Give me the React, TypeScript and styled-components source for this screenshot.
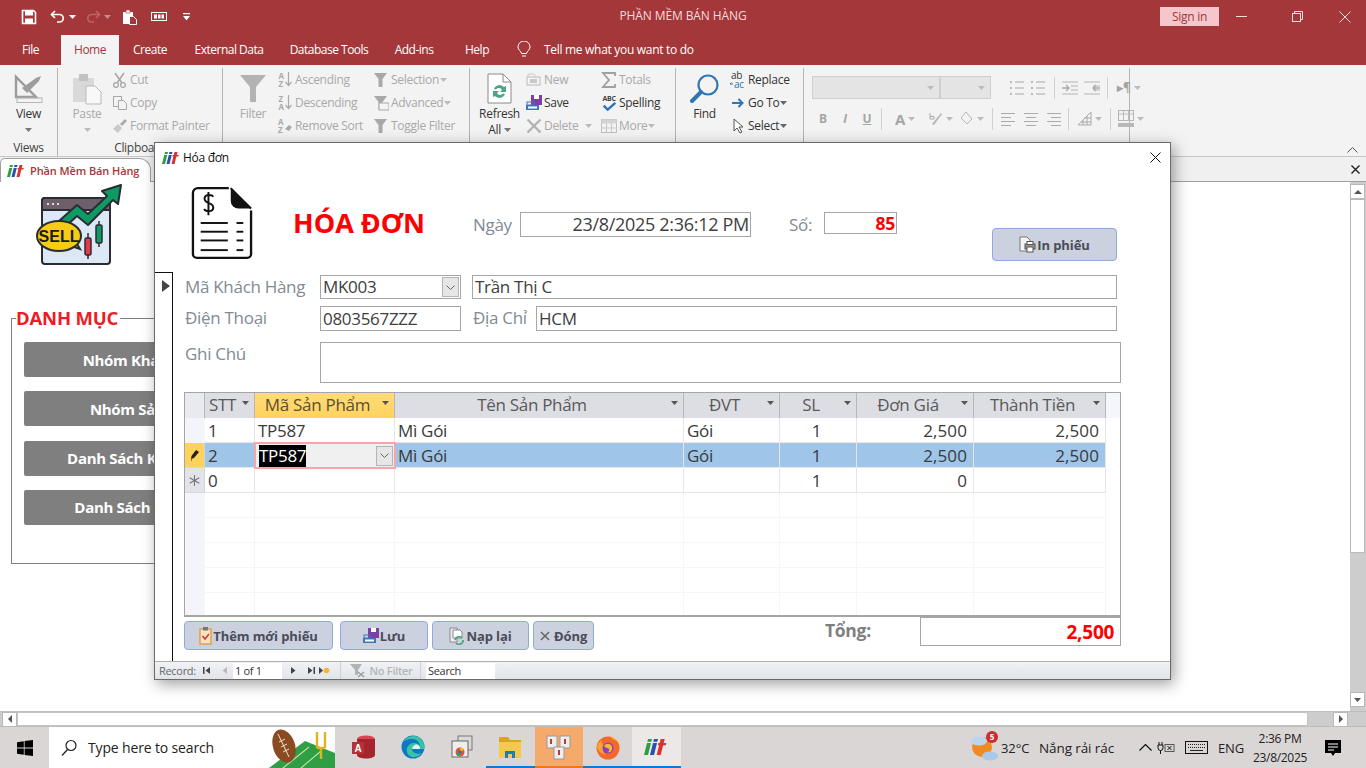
import React from "react";
import styled, { createGlobalStyle } from "styled-components";

const GlobalStyle = createGlobalStyle`
  html, body {
    margin: 0;
    padding: 0;
    width: 1366px;
    height: 768px;
    overflow: hidden;
    background: white;
    font-family: "Open Sans", "Noto Sans", sans-serif;
    letter-spacing: -0.3px;
  }
  * { box-sizing: border-box; }
`;

const OFF = "#a9a9a9";
const GRID_COLS = "20px 50px 140px 289px 96px 77px 117px 132px";

/* ---------- drawings ---------- */

const Ico = ({ s = 16, w, children }: { s?: number; w?: number; children: React.ReactNode }) => (
  <svg width={w ?? s} height={s} viewBox={`0 0 ${w ?? s} ${s}`} fill="none">
    {children}
  </svg>
);

const IifLogo = ({ w = 18, h = 12 }: { w?: number; h?: number }) => (
  <svg width={w} height={h} viewBox="0 0 18 12">
    <g transform="skewX(-14) translate(3 0)">
      <rect x="0" y="0" width="3" height="2" fill="#2e9e3f" />
      <rect x="0" y="3" width="3" height="9" fill="#2e9e3f" />
      <rect x="4.5" y="0" width="3" height="2" fill="#2b4fb0" />
      <rect x="4.5" y="3" width="3" height="9" fill="#2b4fb0" />
      <rect x="9.5" y="0" width="3" height="12" fill="#d8332c" />
      <rect x="8.5" y="3" width="6" height="1.6" fill="#d8332c" />
    </g>
  </svg>
);

const SaveIcon = () => (
  <Ico>
    <path d="M1.5 1.5h11l2 2v11h-13z" stroke="white" strokeWidth="1.6" />
    <rect x="4" y="2" width="8" height="4.5" fill="white" />
    <rect x="4" y="9.5" width="8" height="5" fill="white" />
  </Ico>
);

const UndoIcon = ({ c = "white" }: { c?: string }) => (
  <Ico>
    <path d="M5 2 1.5 5.5 5 9" stroke={c} strokeWidth="1.7" />
    <path d="M2 5.5h7.5a3.7 3.7 0 0 1 0 7.5H7" stroke={c} strokeWidth="1.7" />
  </Ico>
);

const RedoIcon = () => (
  <svg width="16" height="16" viewBox="0 0 16 16" fill="none" opacity="0.45">
    <path d="M11 2l3.5 3.5L11 9" stroke="#d99" strokeWidth="1.7" />
    <path d="M14 5.5H6.5a3.7 3.7 0 0 0 0 7.5H9" stroke="#d99" strokeWidth="1.7" />
  </svg>
);

const PasteQat = () => (
  <Ico>
    <rect x="1" y="3" width="10" height="12" fill="white" />
    <rect x="4" y="1" width="4" height="3" fill="white" stroke="#a4373a" strokeWidth=".6" />
    <path d="M7.5 7.5h4l3 3v5h-7z" fill="#a4373a" stroke="white" />
  </Ico>
);

const TinyCaret = ({ c = "#777" }: { c?: string }) => (
  <svg width="7" height="4" viewBox="0 0 7 4">
    <path d="M0 0h7L3.5 4z" fill={c} />
  </svg>
);

const ViewIcon = () => (
  <svg width="30" height="30" viewBox="0 0 30 30" fill="none">
    <path d="M2 3v20h20z" stroke="#9b9b9b" strokeWidth="2.4" />
    <path d="M8 14 22 4l5-2-2 5-12 12z" fill="#9d9d9d" />
    <rect x="3" y="24" width="25" height="4.5" stroke="#b5b5b5" />
  </svg>
);

const PasteIcon = () => (
  <svg width="30" height="32" viewBox="0 0 30 32">
    <rect x="1" y="5" width="21" height="24" fill="#d9d9d9" />
    <rect x="7" y="1" width="9" height="7" fill="#c2c2c2" />
    <path d="M14 13h9l6 6v12H14z" fill="#f8f8f8" stroke="#b9b9b9" />
  </svg>
);

const FilterBig = () => (
  <svg width="28" height="29" viewBox="0 0 28 29">
    <path d="M1 1h26L17 13v15h-6V13z" fill="#b3b3b3" />
  </svg>
);

const Cut = () => (
  <Ico>
    <circle cx="4" cy="13" r="2.4" stroke={OFF} strokeWidth="1.3" />
    <circle cx="11" cy="13" r="2.4" stroke={OFF} strokeWidth="1.3" />
    <path d="M3 1l7 10M12 1 5 11" stroke={OFF} strokeWidth="1.6" />
  </Ico>
);
const Copy = () => (
  <Ico>
    <rect x="1.5" y="1.5" width="8" height="10" stroke={OFF} />
    <path d="M6.5 5.5h5l3 3v6h-8z" fill="#f3f3f3" stroke={OFF} />
  </Ico>
);
const Painter = () => (
  <Ico>
    <path d="M1 11l5-5 4 4-4 5z" fill="#c9c9c9" />
    <path d="M8 6l5-5 2 2-5 5z" fill="#aaa" />
  </Ico>
);
const SortIcon = ({ a, b, arrow }: { a: string; b: string; arrow?: boolean }) => (
  <SortBox>
    <SortLetters>
      <span>{a}</span>
      <span>{b}</span>
    </SortLetters>
    {arrow !== false ? (
      <svg width="7" height="15" viewBox="0 0 7 15" fill="none">
        <path d="M3.5 0v13M.5 10l3 3.5 3-3.5" stroke={OFF} strokeWidth="1.2" />
      </svg>
    ) : (
      <svg width="8" height="15" viewBox="0 0 8 15">
        <path d="M1 11l4-4 3 2-3 4z" fill={OFF} />
      </svg>
    )}
  </SortBox>
);
const FilterSmall = ({ extra }: { extra?: boolean }) => (
  <Ico>
    <path d="M1 1h13L9.5 7v8h-4V7z" fill={OFF} />
    {extra && <rect x="6" y="8" width="10" height="7" fill="#f3f3f3" stroke={OFF} />}
  </Ico>
);
const RefreshIcon = () => (
  <svg width="25" height="31" viewBox="0 0 25 31" fill="none">
    <path d="M1 1h15l8 8v21H1z" fill="white" stroke="#8a8a8a" />
    <path d="M16 1v8h8" stroke="#8a8a8a" />
    <path d="M7 16a6 6 0 0 1 10-2l2-1v6h-6l2-2a3.5 3.5 0 0 0-6-.5z" fill="#4ea583" />
    <path d="M18 21a6 6 0 0 1-10 2l-2 1v-6h6l-2 2a3.5 3.5 0 0 0 6 .5z" fill="#4ea583" />
  </svg>
);
const NewIcon = () => (
  <Ico>
    <rect x="1" y="5" width="13" height="8" stroke="#bbb" />
    <rect x="4" y="7" width="7" height="4" fill="#c9c9c9" />
    <path d="M2 5V2h6l2 3" stroke="#ccc" />
  </Ico>
);
const FloppyIcon = ({ s = 16 }: { s?: number }) => (
  <svg width={s} height={s} viewBox="0 0 16 16">
    <rect x="5" y="0" width="11" height="10" fill="#7b3fa6" />
    <rect x="8" y="0" width="5" height="4" fill="white" />
    <rect x="0" y="10" width="13" height="5" fill="#3c78b8" />
    <rect x="1" y="7" width="6" height="3" fill="none" stroke="#3c78b8" />
    <rect x="2" y="11.5" width="9" height="2" fill="white" />
  </svg>
);
const DeleteX = ({ c = "#b3b3b3", s = 16 }: { c?: string; s?: number }) => (
  <svg width={s} height={s} viewBox="0 0 16 16">
    <path d="M1.5 1.5 14.5 14.5M14.5 1.5 1.5 14.5" stroke={c} strokeWidth="2.4" />
  </svg>
);
const Sigma = () => (
  <Ico>
    <path d="M14 4V1H2l6 7-6 7h12v-3" stroke="#a0a0a0" strokeWidth="1.8" />
  </Ico>
);
const SpellIcon = () => (
  <SpellBox>
    <SpellText>ABC</SpellText>
    <svg width="15" height="10" viewBox="0 0 15 10" fill="none">
      <path d="M1 4l4.5 4.5L14 1" stroke="#2f75b5" strokeWidth="2.6" />
    </svg>
  </SpellBox>
);
const MoreIcon = () => (
  <Ico>
    <rect x=".5" y="1.5" width="15" height="13" stroke="#c0c0c0" />
    <rect x=".5" y="1.5" width="15" height="4" fill="#d4d4d4" />
    <path d="M.5 10h15M5.5 5v9M10.5 5v9" stroke="#c9c9c9" />
  </Ico>
);
const Magnifier = () => (
  <svg width="30" height="32" viewBox="0 0 30 32" fill="none">
    <circle cx="18" cy="12" r="9.5" stroke="#2f75b5" strokeWidth="2.2" />
    <path d="M11 19 2 28" stroke="#2f75b5" strokeWidth="4" strokeLinecap="round" />
  </svg>
);
const ReplaceIcon = () => (
  <svg width="18" height="18" viewBox="0 0 18 18" fontFamily="Open Sans, sans-serif" fontSize="10">
    <text x="2" y="8" fill="#333">ab</text>
    <text x="5" y="17" fill="#2f75b5">ac</text>
    <path d="M1 13h3M1 13l1.500-1.500" stroke="#2f75b5" fill="none" />
  </svg>
);
const GoToIcon = () => (
  <Ico>
    <path d="M2 8h10M8.5 4l4 4-4 4" stroke="#2f75b5" strokeWidth="2" />
  </Ico>
);
const Cursor = () => (
  <Ico>
    <path d="M4 1v12l3-3 3 5 2-1-3-5h4z" fill="white" stroke="#555" />
  </Ico>
);

const LinesIcon = ({ align }: { align: "l" | "c" | "r" }) => {
  const short = align === "l" ? 1 : align === "c" ? 3 : 5;
  return (
    <Ico>
      {[2, 6, 10, 14].map((y, i) => (
        <rect key={y} x={i % 2 ? short : 1} y={y} width={i % 2 ? 10 : 14} height="1" fill="#aaa" />
      ))}
    </Ico>
  );
};
const ListIcon = () => (
  <Ico>
    {[2, 8, 14].map((y) => (
      <g key={y}>
        <rect x="1" y={y - 1} width="2" height="2" fill="#bbb" />
        <rect x="6" y={y - 0.5} width="9" height="1" fill="#aaa" />
      </g>
    ))}
  </Ico>
);
const IndentIcon = ({ flip }: { flip?: boolean }) => (
  <Ico w={18}>
    <g transform={flip ? "translate(18 0) scale(-1 1)" : undefined}>
      <path d="M1 8h7M5 5l3 3-3 3" stroke="#aaa" strokeWidth="1.4" />
    </g>
    <path d="M1 2h16M1 14h16M10 6h7M10 10h7" stroke="#b5b5b5" />
  </Ico>
);

const ReceiptIcon = () => (
  <svg width="62" height="74" viewBox="0 0 64 76" fill="none">
    <path d="M39 2H7a5 5 0 0 0-5 5v63a4 4 0 0 0 4 4h52a4 4 0 0 0 4-4V25" stroke="#111" strokeWidth="2.4" />
    <path d="M41 2v13a8 8 0 0 0 8 8h13z" fill="#111" />
    <path d="M41 2l21 21" stroke="#111" strokeWidth="2" />
    <path d="M23 11c-1.5-2.500-9-3-9 2 0 5.500 9 3.500 9 9 0 5-8 4.500-9.500 1.500M18 6v24" stroke="#111" strokeWidth="2" />
    {[38, 47, 56, 66].map((y) => (
      <g key={y} stroke="#111" strokeWidth="2">
        <path d={`M10 ${y}h28`} />
        <path d={`M47 ${y}h7`} />
      </g>
    ))}
  </svg>
);

const SellLogo = () => (
  <svg width="88" height="84" viewBox="0 0 88 84" fill="none">
    <rect x="6" y="15" width="68" height="66" rx="3" fill="#dce8f6" stroke="#2b2b33" strokeWidth="2" />
    <path d="M6 18a3 3 0 0 1 3-3h62a3 3 0 0 1 3 3v9H6z" fill="#6d5f6c" stroke="#2b2b33" strokeWidth="2" />
    <path d="M11 21h2M16 21h2M21 21h2" stroke="#dcdcdc" strokeWidth="2" />
    <path d="M23 38 41 22l11 9 19-18-5-5 19-6-3 19-5-4-25 25-11-9-12 11z" fill="#0e9a63" stroke="#2b2b33" strokeWidth="2" strokeLinejoin="round" />
    <path d="M35 63l9 3-6-10z" fill="#f6cc14" stroke="#2b2b33" strokeWidth="2" />
    <ellipse cx="23" cy="53" rx="22" ry="15" fill="#f6cc14" stroke="#2b2b33" strokeWidth="2" />
    <text x="23" y="59" textAnchor="middle" fontFamily="Liberation Sans, sans-serif" fontWeight="700" fontSize="16" letterSpacing="0" fill="#1a1a1a">SELL</text>
    <path d="M52 50v26" stroke="#2b2b33" strokeWidth="1.5" />
    <rect x="49" y="55" width="6" height="17" rx="1.5" fill="#e5394a" stroke="#2b2b33" strokeWidth="1.5" />
    <path d="M63 38v26" stroke="#2b2b33" strokeWidth="1.5" />
    <rect x="60" y="42" width="6" height="18" rx="1.5" fill="#0e9a63" stroke="#2b2b33" strokeWidth="1.5" />
  </svg>
);

const FieldScene = () => (
  <svg width="66" height="41" viewBox="0 0 66 41">
    <path d="M0 41 36 14l30 12v15z" fill="#2f9e44" />
    <path d="M14 41 40 20M32 41 52 24" stroke="#b6e0a6" strokeWidth="1.2" />
    <ellipse cx="15" cy="19" rx="11" ry="17" fill="#8a4a22" transform="rotate(-18 15 19)" />
    <path d="M9 7 20 30M10 15l6-3M12 20l6-3M14 25l6-3" stroke="#f1e3cf" strokeWidth="1" />
    <path d="M52 32v-11M48 21h8M48 21V5M56 21V5" stroke="#e0b224" strokeWidth="2.4" fill="none" />
  </svg>
);

const WinLogo = () => (
  <svg width="16" height="16" viewBox="0 0 16 16">
    <path d="M0 2.2 6.8 1.2v6.400H0zM7.600 1.100 16 0v7.600H7.600zM0 8.400h6.800v6.400L0 13.800zM7.600 8.400H16V16l-8.400-1.100z" fill="#000" />
  </svg>
);
const AccessIcon = () => (
  <svg width="24" height="24" viewBox="0 0 24 24">
    <ellipse cx="14" cy="4" rx="9" ry="3.5" fill="#d94452" />
    <path d="M5 4v16c0 2 4 3.5 9 3.5s9-1.5 9-3.5V4z" fill="#a4262c" />
    <rect x="0" y="7" width="12" height="12" fill="#b7303a" />
    <text x="6" y="17" textAnchor="middle" fontFamily="Liberation Sans, sans-serif" fontWeight="700" fontSize="10" fill="white">A</text>
  </svg>
);
const EdgeIcon = () => (
  <svg width="24" height="24" viewBox="0 0 24 24">
    <circle cx="12" cy="12" r="11.5" fill="#0f78c4" />
    <path d="M1.5 9C4 2 12 -1 18 2.5c4 2.5 6 7 5 11.5H11c0 3.5 5 6 10 4-2 2.5-6 5-10 4-4-1-6-5-5-9 1-3 4-5 7-5 3 0 5 1.500 6 3.500 0-4-3-7-7-7.500-4-.5-8 1-10.500 4z" fill="#38c3a2" />
    <path d="M11 14c.5-3 2.500-4.500 4.500-4.500s3.500 1.500 3.500 4.500z" fill="#dff5ec" />
  </svg>
);
const WindowsStack = () => (
  <svg width="22" height="24" viewBox="0 0 22 24" fill="none">
    <rect x="7" y="1" width="14" height="14" fill="#d9d9d9" stroke="#777" />
    <rect x="1" y="6" width="16" height="16" fill="#eee" stroke="#666" />
    <circle cx="9" cy="17" r="4.5" fill="#e74c3c" />
    <path d="M9 17V12.500A4.500 4.500 0 0 1 13 15z" fill="#f1c40f" />
    <path d="M9 17l-4 2a4.500 4.500 0 0 0 4 2.500z" fill="#2fa84f" />
    <circle cx="9" cy="17" r="1.8" fill="#2f75b5" />
  </svg>
);
const FolderIcon = () => (
  <svg width="24" height="24" viewBox="0 0 24 24">
    <path d="M1 2h9l2 3h11v5H1z" fill="#d9a520" />
    <rect x="1" y="7" width="22" height="16" fill="#f5ca4c" />
    <rect x="7" y="16" width="10" height="7" fill="#1f7bc1" />
    <rect x="10" y="19" width="4" height="4" fill="#f5ca4c" />
  </svg>
);
const KeysIcon = () => (
  <svg width="26" height="26" viewBox="0 0 26 26">
    <rect x="1" y="2" width="10" height="12" fill="#eee" stroke="#999" />
    <rect x="14" y="2" width="10" height="12" fill="#eee" stroke="#999" />
    <rect x="8" y="13" width="10" height="12" fill="#eee" stroke="#999" />
    <path d="M5 5v5M19 5v5M13 16v5" stroke="#c0392b" strokeWidth="2" />
  </svg>
);
const FirefoxIcon = () => (
  <svg width="26" height="26" viewBox="0 0 26 26">
    <circle cx="13" cy="14" r="11.5" fill="#f4682c" />
    <path d="M13 2c6 0 12 5 12 12 0-5-4-8-7-9 0 0-2-3-5-3z" fill="#ffc22d" />
    <path d="M2 12c1-3 3-5 5-6-1 3 1 6 6 6-6 0-7 6-2 9-5-1-9-5-9-9z" fill="#f9a12e" />
    <circle cx="13" cy="14" r="5.5" fill="#8a3fbf" />
    <path d="M9 12c2-3 7-3 8 1s-2 6-5 5c3 0 3-4 0-4-1 0-2-1-3-2z" fill="#f7b731" />
  </svg>
);
const WeatherIcon = () => (
  <svg width="28" height="26" viewBox="0 0 28 26">
    <circle cx="12" cy="12" r="10" fill="#f08a24" />
    <ellipse cx="9" cy="6" rx="8" ry="4.5" fill="#bcd6ef" />
    <ellipse cx="20" cy="21" rx="8" ry="4.5" fill="#a8c9ea" />
  </svg>
);
const PowerIcon = () => (
  <svg width="18" height="14" viewBox="0 0 18 14" fill="none">
    <path d="M2 1v3M5 1v3M1 4h5v3a2.500 2.500 0 0 1-5 0zM3.500 9.500V13" stroke="#111" />
    <rect x="8" y="3.5" width="9" height="7" stroke="#555" />
    <path d="M10.500 5l4 4M14.500 5l-4 4" stroke="#111" />
  </svg>
);
const KeyboardIcon = () => (
  <svg width="23" height="13" viewBox="0 0 23 13" fill="none">
    <rect x=".5" y=".5" width="22" height="12" stroke="#111" />
    <path d="M3 3.500h17M3 6.500h17" stroke="#222" strokeDasharray="1 1" />
    <path d="M5 9.500h13" stroke="#222" />
  </svg>
);
const NotifyIcon = () => (
  <svg width="18" height="18" viewBox="0 0 18 18">
    <path d="M1 1h16v13h-6l-2 3-2-3H1z" fill="#000" />
    <path d="M4 5h10M4 8h10M4 11h6" stroke="white" />
  </svg>
);
const ClipCheck = () => (
  <svg width="13" height="18" viewBox="0 0 13 18" fill="none">
    <rect x="1" y="2" width="11" height="15" fill="#fbe4c2" stroke="#e49b43" strokeWidth="1.4" />
    <rect x="4" y="0" width="5" height="3.5" fill="#777" />
    <path d="M3.500 9l2.500 3 4-5" stroke="#c8392f" strokeWidth="1.5" />
  </svg>
);
const ReloadDoc = () => (
  <svg width="16" height="18" viewBox="0 0 16 18" fill="none">
    <path d="M1 1h7v14H1z" fill="#eee" stroke="#888" />
    <path d="M4 3h7l2 2v6H4z" fill="#fff" stroke="#888" />
    <path d="M6 13a4 4 0 0 1 7-2M14 13a4 4 0 0 1-7 3" stroke="#4ea583" strokeWidth="1.8" />
  </svg>
);
const PrintDoc = () => (
  <svg width="17" height="17" viewBox="0 0 17 17" fill="none">
    <path d="M1 1h7l3 3v11H1z" fill="#f4f4f4" stroke="#777" />
    <rect x="6" y="8" width="10" height="5" fill="#999" stroke="#555" />
    <rect x="8" y="11" width="6" height="5" fill="#fff" stroke="#555" />
    <rect x="8" y="5.5" width="6" height="3" fill="#fff" stroke="#555" />
  </svg>
);
const FilterOff = () => (
  <svg width="18" height="15" viewBox="0 0 18 15">
    <path d="M1 1h12L9 7v5H6V7z" fill="#b3b3b3" />
    <path d="M9 9l6 5M15 9l-6 5" stroke="#999" strokeWidth="1.4" />
  </svg>
);
const NavIcon = ({ kind }: { kind: "first" | "prev" | "next" | "last" | "new" }) => (
  <svg width="12" height="9" viewBox="0 0 12 9">
    {kind === "first" && <path d="M2 1h1.500v7H2zM9 1v7L4.500 4.500z" fill="#444" />}
    {kind === "prev" && <path d="M8 1v7L3.500 4.500z" fill="#b9b9b9" />}
    {kind === "next" && <path d="M4 1v7l4.500-3.500z" fill="#444" />}
    {kind === "last" && <path d="M3 1v7l4.500-3.500zM8.500 1H10v7H8.500z" fill="#444" />}
    {kind === "new" && (
      <g>
        <path d="M1 1v7l4-3.500z" fill="#444" />
        <circle cx="8.5" cy="4.5" r="2.8" fill="#f2b43c" />
      </g>
    )}
  </svg>
);
const ComboArrow = () => (
  <svg width="9" height="5" viewBox="0 0 9 5" fill="none">
    <path d="M.5.500l4 4 4-4" stroke="#666" />
  </svg>
);
const NewRowMark = () => (
  <svg width="11" height="11" viewBox="0 0 11 11" fill="none">
    <path d="M5.500 0v11M.7 2.700l9.600 5.600M10.300 2.700.7 8.300" stroke="#777" strokeWidth="1.1" />
  </svg>
);

/* ---------- window chrome ---------- */

const Screen = styled.div`
  position: relative;
  width: 1366px;
  height: 768px;
  display: flex;
  flex-direction: column;
  overflow: hidden;
  background: white;
`;

const TitleBar = styled.div`
  height: 33px;
  background: #a4373a;
  display: grid;
  grid-template-columns: 1fr auto 1fr;
  align-items: center;
  color: white;
`;

const Qat = styled.div`
  display: flex;
  align-items: center;
  padding-left: 21px;
`;

const QatSlot = styled.div<{ $w: number }>`
  width: ${(p) => p.$w}px;
  display: flex;
  align-items: center;
  gap: 3px;
`;

const AppTitle = styled.div`
  font-size: 12px;
  color: #f3dcdc;
  letter-spacing: -0.1px;
  padding-bottom: 2px;
`;

const TitleRight = styled.div`
  display: flex;
  justify-content: flex-end;
  align-items: center;
`;

const SignIn = styled.div`
  width: 59px;
  height: 19px;
  margin-bottom: 1px;
  background: #f5c6cb;
  color: #a4373a;
  font-size: 12px;
  display: flex;
  align-items: center;
  justify-content: center;
`;

const WinButton = styled.div<{ $w: number; $padRight?: number }>`
  width: ${(p) => p.$w}px;
  height: 28px;
  padding-right: ${(p) => p.$padRight ?? 0}px;
  display: flex;
  align-items: center;
  justify-content: center;
`;

const TabBar = styled.div`
  height: 32px;
  background: #a4373a;
  display: flex;
  align-items: flex-end;
`;

const RibbonTab = styled.div<{ $active?: boolean; $w: number }>`
  width: ${(p) => p.$w}px;
  height: 30px;
  display: flex;
  align-items: center;
  justify-content: center;
  font-size: 12px;
  letter-spacing: -0.5px;
  padding-bottom: 2px;
  color: ${(p) => (p.$active ? "#a4373a" : "white")};
  background: ${(p) => (p.$active ? "#f3f3f3" : "transparent")};
`;

const TellMe = styled.div`
  display: flex;
  align-items: center;
  gap: 13px;
  margin-left: 10px;
  height: 30px;
  padding-bottom: 2px;
  font-size: 12px;
  color: white;
`;

const Ribbon = styled.div`
  height: 92px;
  background: #f3f3f3;
  display: flex;
  border-bottom: 1px solid #c6c6c6;
`;

const Group = styled.div<{ $w: number }>`
  width: ${(p) => p.$w}px;
  height: 88px;
  margin-top: 3px;
  border-right: 1px solid #b4b4b4;
  display: flex;
  flex-direction: column;
`;

const GroupBody = styled.div`
  height: 75px;
  display: flex;
`;

const GroupLabel = styled.div`
  font-size: 12px;
  text-align: center;
  color: #444;
  line-height: 16px;
`;

const BigButton = styled.div<{ $w: number; $off?: boolean }>`
  width: ${(p) => p.$w}px;
  flex: none;
  display: flex;
  flex-direction: column;
  align-items: center;
  padding-top: 3px;
  font-size: 12px;
  line-height: 16px;
  color: ${(p) => (p.$off ? OFF : "#333")};
`;

const BigIconBox = styled.div`
  height: 35px;
  display: flex;
  align-items: center;
  justify-content: center;
`;

const CaretLine = styled.div`
  height: 16px;
  display: flex;
  align-items: center;
  justify-content: center;
  gap: 3px;
`;

const SmallList = styled.div<{ $w: number; $left?: number }>`
  width: ${(p) => p.$w}px;
  flex: none;
  margin-left: ${(p) => p.$left ?? 0}px;
  display: flex;
  flex-direction: column;
`;

const SmallRow = styled.div<{ $off?: boolean }>`
  height: 23px;
  display: flex;
  align-items: center;
  gap: 1px;
  font-size: 12px;
  color: ${(p) => (p.$off ? OFF : "#333")};
`;

const SmallIcon = styled.div`
  width: 18px;
  display: flex;
  justify-content: center;
`;

const SortBox = styled.div`
  display: flex;
  align-items: center;
  gap: 1px;
`;

const SortLetters = styled.div`
  display: flex;
  flex-direction: column;
  font-size: 8px;
  line-height: 8px;
  font-weight: 700;
  color: ${OFF};
`;

const SpellBox = styled.div`
  display: flex;
  flex-direction: column;
  align-items: center;
  height: 16px;
`;

const SpellText = styled.div`
  font-size: 7px;
  line-height: 7px;
  font-weight: 700;
  color: #444;
`;

const FontGroup = styled.div`
  padding: 8px 0 0 8px;
  display: flex;
  flex-direction: column;
  gap: 8px;
`;

const FontLine = styled.div`
  height: 23px;
  display: flex;
  align-items: center;
`;

const FontCombo = styled.div<{ $w: number }>`
  width: ${(p) => p.$w}px;
  height: 23px;
  flex: none;
  background: #e4e4e4;
  border: 1px solid #cfcfcf;
  display: flex;
  align-items: center;
  justify-content: flex-end;
  padding-right: 5px;
`;

const ToolSlot = styled.div<{ $w: number; $left?: number }>`
  width: ${(p) => p.$w}px;
  flex: none;
  margin-left: ${(p) => p.$left ?? 0}px;
  display: flex;
  align-items: center;
  justify-content: center;
  gap: 3px;
  font-size: 12px;
  color: ${OFF};
`;

const ToolSep = styled.div<{ $left?: number }>`
  width: 1px;
  height: 22px;
  flex: none;
  background: #d0d0d0;
  margin: 0 3px 0 ${(p) => 3 + (p.$left ?? 0)}px;
`;

const BoldGlyph = styled.span<{ $italic?: boolean; $under?: boolean; $size?: number }>`
  font-weight: 700;
  font-size: ${(p) => p.$size ?? 12}px;
  font-style: ${(p) => (p.$italic ? "italic" : "normal")};
  text-decoration: ${(p) => (p.$under ? "underline" : "none")};
  color: #a5a5a5;
`;

const RibbonRest = styled.div`
  flex: 1;
  display: flex;
  justify-content: flex-end;
  align-items: flex-end;
  padding: 0 8px 3px 0;
`;

/* ---------- document behind the dialog ---------- */

const DocArea = styled.div`
  height: 570px;
  display: flex;
  flex-direction: column;
`;

const DocTabs = styled.div`
  height: 25px;
  background: #f0f0f0;
  border-bottom: 1px solid #a0a0a0;
  display: flex;
  align-items: flex-end;
  justify-content: space-between;
`;

const DocTab = styled.div`
  width: 151px;
  height: 24px;
  margin-bottom: -1px;
  background: white;
  border: 1px solid #a0a0a0;
  border-bottom: none;
  border-radius: 5px 12px 0 0;
  display: flex;
  align-items: center;
  gap: 5px;
  padding-left: 6px;
  font-size: 11px;
  font-weight: 600;
  color: #a4373a;
  letter-spacing: -0.1px;
`;

const DocClose = styled.div`
  width: 22px;
  height: 24px;
  display: flex;
  align-items: center;
  justify-content: center;
`;

const DocMiddle = styled.div`
  flex: 1;
  display: flex;
  min-height: 0;
`;

const DocBody = styled.div`
  flex: 1;
  padding-left: 11px;
  display: flex;
  flex-direction: column;
`;

const LogoRow = styled.div`
  height: 124px;
  padding: 1px 0 0 25px;
`;

const MenuFrame = styled.fieldset`
  width: 400px;
  height: 258px;
  margin: 0;
  padding: 12px 12px 0;
  border: 1px solid #808080;
  display: flex;
  flex-direction: column;
`;

const MenuLegend = styled.legend`
  margin-left: -8px;
  padding: 0 2px 0 0;
  color: #ee1c25;
  font-weight: 700;
  font-size: 18.5px;
  line-height: 24px;
  letter-spacing: -0.2px;
`;

const MenuButton = styled.div`
  width: 252px;
  height: 35px;
  margin-bottom: 14.3px;
  background: #7f7f7f;
  border-radius: 2px;
  color: white;
  font-weight: 700;
  font-size: 15px;
  display: flex;
  align-items: center;
  justify-content: center;
`;

const VScroll = styled.div`
  width: 16px;
  background: #cdcdcd;
  padding: 2px 0 4px;
  display: flex;
  flex-direction: column;
`;

const ScrollBtn = styled.div`
  width: 15px;
  height: 15px;
  background: white;
  border: 1px solid #b9b9b9;
  display: flex;
  align-items: center;
  justify-content: center;
  flex: none;
`;

const VThumb = styled.div`
  width: 15px;
  height: 354px;
  background: white;
  border: 1px solid #b9b9b9;
`;

const ScrollGap = styled.div`
  flex: 1;
`;

const HScroll = styled.div`
  height: 16px;
  background: #cdcdcd;
  border-top: 1px solid #bdbdbd;
  border-bottom: 1px solid #bdbdbd;
  display: flex;
  align-items: center;
  padding-left: 2px;
`;

const HThumb = styled.div`
  width: 1291px;
  height: 14px;
  background: white;
  border: 1px solid #c4c4c4;
`;

const HGap = styled.div`
  width: 25px;
`;

/* ---------- dialog ---------- */

const Dialog = styled.div`
  position: absolute;
  top: 142px;
  left: 154px;
  width: 1017px;
  height: 538px;
  background: white;
  border: 1px solid #6a6a6a;
  box-shadow: 3px 4px 14px rgba(0, 0, 0, 0.38);
  display: flex;
  flex-direction: column;
`;

const Caption = styled.div`
  height: 29px;
  flex: none;
  display: flex;
  align-items: center;
  padding-left: 7px;
  gap: 3px;
  font-size: 12px;
  color: #111;
`;

const CaptionClose = styled.div`
  margin-left: auto;
  width: 30px;
  display: flex;
  justify-content: center;
`;

const FormHeader = styled.div`
  height: 100px;
  flex: none;
  display: flex;
  align-items: flex-start;
  padding-left: 36px;
`;

const ReceiptBox = styled.div`
  margin-top: 14px;
  width: 64px;
  height: 78px;
`;

const FormTitle = styled.div`
  margin: 32px 0 0 38px;
  width: 180px;
  color: #ff0000;
  font-size: 27px;
  line-height: 38px;
  font-weight: 700;
  letter-spacing: 0;
`;

const HeaderGroup = styled.div`
  display: flex;
  align-items: flex-start;
  margin-top: 40px;
`;

const HeadLabel = styled.div<{ $w: number; $left?: number }>`
  width: ${(p) => p.$w}px;
  margin-left: ${(p) => p.$left ?? 0}px;
  height: 25px;
  font-size: 17px;
  line-height: 25px;
  color: #828a93;
`;

const Field = styled.div<{ $w: number; $h?: number; $right?: boolean; $size?: number; $left?: number; $lh?: number }>`
  width: ${(p) => p.$w}px;
  flex: none;
  margin-left: ${(p) => p.$left ?? 0}px;
  height: ${(p) => p.$h ?? 25}px;
  border: 1px solid #a6a6a6;
  background: white;
  color: #404040;
  font-size: ${(p) => p.$size ?? 17}px;
  line-height: ${(p) => p.$lh ?? 23}px;
  padding: 0 1px 0 2px;
  white-space: nowrap;
  overflow: hidden;
  text-align: ${(p) => (p.$right ? "right" : "left")};
`;

const RedValue = styled.span<{ $size?: number }>`
  color: #ff0000;
  font-weight: 700;
  font-size: ${(p) => p.$size ?? 17.5}px;
  line-height: 1;
  letter-spacing: -0.2px;
`;

const CmdButton = styled.div<{ $w: number; $h?: number; $left?: number }>`
  width: ${(p) => p.$w}px;
  height: ${(p) => p.$h ?? 29}px;
  margin-left: ${(p) => p.$left ?? 0}px;
  flex: none;
  background: #ccd1df;
  border: 1px solid #8faadc;
  border-radius: 4px;
  color: #4a4c58;
  font-weight: 700;
  font-size: 13px;
  display: flex;
  align-items: center;
  justify-content: center;
  gap: 1px;
  letter-spacing: -0.1px;
`;

const PrintSlot = styled.div`
  margin: 56px 0 0 95px;
`;

const FormDetail = styled.div`
  flex: 1;
  min-height: 0;
  display: flex;
`;

const Selector = styled.div`
  width: 18px;
  flex: none;
  border-top: 1px solid #111;
  border-right: 1px solid #111;
  padding: 2px 0 0 7px;
`;

const DetailBody = styled.div`
  width: 948px;
  padding-left: 11px;
  display: flex;
  flex-direction: column;
`;

const FormRow = styled.div<{ $top: number; $h: number }>`
  display: flex;
  margin-top: ${(p) => p.$top}px;
  height: ${(p) => p.$h}px;
`;

const RowLabel = styled.div<{ $w: number; $left?: number }>`
  width: ${(p) => p.$w}px;
  margin-left: ${(p) => p.$left ?? 1}px;
  flex: none;
  color: #828a93;
  font-size: 17px;
  line-height: 24px;
`;

const Combo = styled.div`
  width: 141px;
  height: 24px;
  flex: none;
  border: 1px solid #a6a6a6;
  font-size: 17px;
  line-height: 22px;
  color: #404040;
  padding-left: 2px;
  display: flex;
  justify-content: space-between;
`;

const ComboBtn = styled.div`
  width: 17px;
  height: 20px;
  margin: 1px;
  flex: none;
  background: #e6e6e6;
  border: 1px solid #b4b4b4;
  display: flex;
  align-items: center;
  justify-content: center;
`;

const Datasheet = styled.div`
  margin-top: 9px;
  width: 937px;
  height: 225px;
  flex: none;
  border: 1px solid #a6a6a6;
  border-bottom: 2px solid #a6a6a6;
  overflow: hidden;
`;

const SheetHead = styled.div`
  display: grid;
  grid-template-columns: ${GRID_COLS} 1fr;
  height: 25px;
`;

const HeadCell = styled.div<{ $active?: boolean; $corner?: boolean; $tail?: boolean }>`
  background: ${(p) =>
    p.$active ? "linear-gradient(#ffdc7a, #ffd25c)" : p.$tail ? "#f4f6fc" : p.$corner ? "#e9eaf0" : "#dddee3"};
  border-right: 1px solid ${(p) => (p.$tail ? "transparent" : "#b5b5bb")};
  font-size: 17px;
  line-height: 24px;
  color: ${(p) => (p.$active ? "#5a5030" : "#595959")};
  display: flex;
  justify-content: center;
  padding-right: 14px;
  position: relative;
`;

const SortCaret = styled.div`
  position: absolute;
  right: 5px;
  top: 6px;
  line-height: 0;
`;

const SheetRow = styled.div<{ $on?: boolean }>`
  display: grid;
  grid-template-columns: ${GRID_COLS} 1fr;
  height: 25px;
  background: ${(p) => (p.$on ? "#9fc5e8" : "white")};
`;

const Cell = styled.div<{ $align?: "left" | "center" | "right"; $faint?: boolean }>`
  border-right: 1px solid ${(p) => (p.$faint ? "#f6f6f6" : "#e6e6e6")};
  border-bottom: 1px solid ${(p) => (p.$faint ? "#f6f6f6" : "#e6e6e6")};
  font-size: 17px;
  line-height: 26px;
  color: #3a3a3a;
  padding: 0 6px 0 3px;
  letter-spacing: ${(p) => (p.$align === "right" ? "0.1px" : "-0.3px")};
  text-align: ${(p) => p.$align ?? "left"};
  white-space: nowrap;
  overflow: hidden;
`;

const RowHead = styled.div<{ $edit?: boolean; $faint?: boolean }>`
  background: ${(p) => (p.$edit ? "#ffd25c" : p.$faint ? "#f4f5fb" : "#e3e4ea")};
  border-bottom: 1px solid ${(p) => (p.$faint ? "#f6f6f6" : "#d9d9d9")};
  border-right: 1px solid ${(p) => (p.$faint ? "#f6f6f6" : "#d4d4d4")};
  display: flex;
  align-items: center;
  justify-content: center;
`;

const Tail = styled.div`
  background: white;
`;

const ActiveCell = styled.div`
  border: 2px solid #f4a6ab;
  margin: -1px 0 -1px -1px;
  width: 142px;
  background: #f0f0f0;
  display: flex;
  align-items: center;
  justify-content: space-between;
  padding-left: 3px;
  z-index: 1;
`;

const Selected = styled.span`
  background: #000;
  color: white;
  font-size: 17px;
  line-height: 22px;
`;

const SheetFooter = styled.div`
  display: flex;
  height: 40px;
`;

const ButtonRow = styled.div`
  display: flex;
  gap: 4px;
  padding-top: 4px;
`;

const TotalLabel = styled.div`
  margin-left: 231px;
  width: 95px;
  font-size: 17.5px;
  font-weight: 700;
  line-height: 26px;
  color: #7f7f7f;
`;

const RecordBar = styled.div`
  height: 18px;
  flex: none;
  background: linear-gradient(#f1f2f6, #e3e4ea);
  border-top: 1px solid #b0b0b0;
  display: flex;
  align-items: center;
  padding-left: 4px;
  font-size: 11px;
  color: #666;
`;

const RecordLabel = styled.div`
  width: 39px;
  flex: none;
`;

const NavSlot = styled.div<{ $w: number }>`
  width: ${(p) => p.$w}px;
  display: flex;
  align-items: center;
  justify-content: center;
  flex: none;
`;

const NavBox = styled.div<{ $w: number }>`
  width: ${(p) => p.$w}px;
  height: 16px;
  background: white;
  padding-left: 2px;
  line-height: 16px;
  color: #333;
  flex: none;
`;

const NavSep = styled.div`
  width: 1px;
  height: 17px;
  background: #cfcfcf;
  flex: none;
`;

const NoFilter = styled.div`
  width: 79px;
  display: flex;
  align-items: center;
  justify-content: center;
  gap: 3px;
  color: #b5b5b5;
  font-weight: 600;
  flex: none;
`;

/* ---------- taskbar ---------- */

const Taskbar = styled.div`
  height: 41px;
  background: #dbd6d6;
  display: flex;
  align-items: stretch;
`;

const StartButton = styled.div`
  width: 49px;
  display: flex;
  align-items: center;
  justify-content: center;
`;

const SearchBox = styled.div`
  width: 286px;
  background: white;
  display: flex;
  align-items: center;
  padding-left: 12px;
  gap: 11px;
  font-size: 14px;
  color: #222;
  letter-spacing: -0.15px;
`;

const SceneSlot = styled.div`
  margin-left: auto;
  align-self: flex-end;
  height: 41px;
  line-height: 0;
`;

const TaskApps = styled.div`
  display: flex;
  padding-left: 5px;
`;

const TaskApp = styled.div<{ $bg?: string; $bar?: string }>`
  width: 48.7px;
  display: flex;
  align-items: center;
  justify-content: center;
  background: ${(p) => p.$bg ?? "transparent"};
  border-bottom: 2px solid ${(p) => p.$bar ?? "transparent"};
`;

const Tray = styled.div`
  margin-left: auto;
  padding-right: 12px;
  display: flex;
  align-items: center;
  font-size: 13px;
  color: #222;
  letter-spacing: -0.1px;
`;

const TraySlot = styled.div<{ $w: number; $start?: boolean; $size?: number }>`
  width: ${(p) => p.$w}px;
  flex: none;
  display: flex;
  align-items: center;
  justify-content: ${(p) => (p.$start ? "flex-start" : "center")};
  font-size: ${(p) => p.$size ?? 13}px;
  position: relative;
`;

const Badge = styled.div`
  position: absolute;
  top: -4px;
  right: 3px;
  width: 12px;
  height: 12px;
  border-radius: 50%;
  background: #d02b2b;
  color: white;
  font-size: 8px;
  font-weight: 700;
  line-height: 12px;
  text-align: center;
`;

const Clock = styled.div`
  width: 64px;
  flex: none;
  text-align: center;
  font-size: 12px;
  line-height: 19px;
  letter-spacing: -0.3px;
`;

/* ---------- data ---------- */

const columns = ["STT", "Mã Sản Phẩm", "Tên Sản Phẩm", "ĐVT", "SL", "Đơn Giá", "Thành Tiền"];
const menuItems = ["Nhóm Khách Hàng", "Nhóm Sản Phẩm", "Danh Sách Khách Hàng", "Danh Sách Sản Phẩm"];
const tabs = [
  { label: "File", w: 61 },
  { label: "Home", w: 58, active: true },
  { label: "Create", w: 62 },
  { label: "External Data", w: 96 },
  { label: "Database Tools", w: 104 },
  { label: "Add-ins", w: 66 },
  { label: "Help", w: 60 },
];

const RibbonSmall = ({ icon, text, off, caret }: { icon: React.ReactNode; text: string; off?: boolean; caret?: boolean }) => (
  <SmallRow $off={off}>
    <SmallIcon>{icon}</SmallIcon>
    {text}
    {caret && <TinyCaret c={off ? "#bbb" : "#666"} />}
  </SmallRow>
);

const EmptyRow = () => (
  <SheetRow>
    <RowHead $faint />
    {columns.map((c) => (
      <Cell key={c} $faint />
    ))}
    <Tail />
  </SheetRow>
);

export default function App() {
  return (
    <Screen>
      <GlobalStyle />
      <TitleBar>
        <Qat>
          <QatSlot $w={29}>
            <SaveIcon />
          </QatSlot>
          <QatSlot $w={35}>
            <UndoIcon />
            <TinyCaret c="white" />
          </QatSlot>
          <QatSlot $w={37}>
            <RedoIcon />
            <TinyCaret c="#c98a8c" />
          </QatSlot>
          <QatSlot $w={29}>
            <PasteQat />
          </QatSlot>
          <QatSlot $w={32}>
            <svg width="16" height="9" viewBox="0 0 16 9" fill="none">
              <rect x=".5" y=".5" width="15" height="8" stroke="white" />
              <path d="M3 2.500h3v4H3zM7 2.500h2.500v4H7zM10.500 2.500H13v4h-2.500z" fill="white" />
            </svg>
          </QatSlot>
          <QatSlot $w={16}>
            <svg width="7" height="8" viewBox="0 0 7 8">
              <path d="M0 0h7v1.200H0zM0 3h7L3.500 7.500z" fill="white" />
            </svg>
          </QatSlot>
        </Qat>
        <AppTitle>PHẦN MỀM BÁN HÀNG</AppTitle>
        <TitleRight>
          <SignIn>Sign in</SignIn>
          <WinButton $w={51} $padRight={7}>
            <svg width="11" height="1" viewBox="0 0 11 1">
              <rect width="11" height="1" fill="#f3dcdc" />
            </svg>
          </WinButton>
          <WinButton $w={54}>
            <svg width="11" height="11" viewBox="0 0 11 11" fill="none">
              <rect x=".5" y="2.500" width="8" height="8" stroke="#f3dcdc" />
              <path d="M2.500 2.500v-2h8v8h-2" stroke="#f3dcdc" />
            </svg>
          </WinButton>
          <WinButton $w={42}>
            <svg width="12" height="12" viewBox="0 0 12 12" fill="none">
              <path d="M.5.500l11 11M11.500.500l-11 11" stroke="#f3dcdc" />
            </svg>
          </WinButton>
        </TitleRight>
      </TitleBar>

      <TabBar>
        {tabs.map((t) => (
          <RibbonTab key={t.label} $w={t.w} $active={t.active}>
            {t.label}
          </RibbonTab>
        ))}
        <TellMe>
          <svg width="14" height="17" viewBox="0 0 14 17" fill="none">
            <path d="M4.500 12.500C4 10 1 9 1 6a6 6 0 0 1 12 0c0 3-3 4-3.500 6.500z" stroke="white" />
            <path d="M5 15h4" stroke="white" />
          </svg>
          Tell me what you want to do
        </TellMe>
      </TabBar>

      <Ribbon>
        <Group $w={58}>
          <GroupBody>
            <BigButton $w={57}>
              <BigIconBox>
                <ViewIcon />
              </BigIconBox>
              View
              <CaretLine>
                <TinyCaret />
              </CaretLine>
            </BigButton>
          </GroupBody>
          <GroupLabel>Views</GroupLabel>
        </Group>

        <Group $w={165}>
          <GroupBody>
            <BigButton $w={58} $off>
              <BigIconBox>
                <PasteIcon />
              </BigIconBox>
              Paste
              <CaretLine>
                <TinyCaret c="#bbb" />
              </CaretLine>
            </BigButton>
            <SmallList $w={105} $left={-5}>
              <RibbonSmall off icon={<Cut />} text="Cut" />
              <RibbonSmall off icon={<Copy />} text="Copy" />
              <RibbonSmall off icon={<Painter />} text="Format Painter" />
            </SmallList>
          </GroupBody>
          <GroupLabel>Clipboard</GroupLabel>
        </Group>

        <Group $w={247}>
          <GroupBody>
            <BigButton $w={60} $off>
              <BigIconBox>
                <FilterBig />
              </BigIconBox>
              Filter
            </BigButton>
            <SmallList $w={96} $left={-7}>
              <RibbonSmall off icon={<SortIcon a="A" b="Z" />} text="Ascending" />
              <RibbonSmall off icon={<SortIcon a="Z" b="A" />} text="Descending" />
              <RibbonSmall off icon={<SortIcon a="A" b="Z" arrow={false} />} text="Remove Sort" />
            </SmallList>
            <SmallList $w={95}>
              <RibbonSmall off caret icon={<FilterSmall />} text="Selection" />
              <RibbonSmall off caret icon={<FilterSmall extra />} text="Advanced" />
              <RibbonSmall off icon={<FilterSmall />} text="Toggle Filter" />
            </SmallList>
          </GroupBody>
        </Group>

        <Group $w={206}>
          <GroupBody>
            <BigButton $w={59}>
              <BigIconBox>
                <RefreshIcon />
              </BigIconBox>
              Refresh
              <CaretLine>
                All
                <TinyCaret />
              </CaretLine>
            </BigButton>
            <SmallList $w={75} $left={-4}>
              <RibbonSmall off icon={<NewIcon />} text="New" />
              <RibbonSmall icon={<FloppyIcon />} text="Save" />
              <SmallRow $off>
                <SmallIcon>
                  <DeleteX />
                </SmallIcon>
                Delete
                <ToolSlot $w={18}>
                  <TinyCaret c="#bbb" />
                </ToolSlot>
              </SmallRow>
            </SmallList>
            <SmallList $w={70}>
              <RibbonSmall off icon={<Sigma />} text="Totals" />
              <RibbonSmall icon={<SpellIcon />} text="Spelling" />
              <RibbonSmall off caret icon={<MoreIcon />} text="More" />
            </SmallList>
          </GroupBody>
        </Group>

        <Group $w={128}>
          <GroupBody>
            <BigButton $w={57}>
              <BigIconBox>
                <Magnifier />
              </BigIconBox>
              Find
            </BigButton>
            <SmallList $w={70} $left={-4}>
              <RibbonSmall icon={<ReplaceIcon />} text="Replace" />
              <RibbonSmall caret icon={<GoToIcon />} text="Go To" />
              <RibbonSmall caret icon={<Cursor />} text="Select" />
            </SmallList>
          </GroupBody>
        </Group>

        <Group $w={326}>
          <FontGroup>
            <FontLine>
              <FontCombo $w={128}>
                <TinyCaret c="#bbb" />
              </FontCombo>
              <FontCombo $w={51}>
                <TinyCaret c="#bbb" />
              </FontCombo>
              <ToolSlot $w={26} $left={13}>
                <ListIcon />
              </ToolSlot>
              <ToolSlot $w={16}>
                <ListIcon />
              </ToolSlot>
              <ToolSep $left={5} />
              <ToolSlot $w={24}>
                <IndentIcon />
              </ToolSlot>
              <ToolSlot $w={20}>
                <IndentIcon flip />
              </ToolSlot>
              <ToolSep $left={2} />
              <ToolSlot $w={36}>
                <BoldGlyph>▸¶</BoldGlyph>
                <TinyCaret c="#bbb" />
              </ToolSlot>
            </FontLine>
            <FontLine>
              <ToolSlot $w={22}>
                <BoldGlyph>B</BoldGlyph>
              </ToolSlot>
              <ToolSlot $w={22}>
                <BoldGlyph $italic>I</BoldGlyph>
              </ToolSlot>
              <ToolSlot $w={22}>
                <BoldGlyph $under>U</BoldGlyph>
              </ToolSlot>
              <ToolSep />
              <ToolSlot $w={40}>
                <BoldGlyph $size={15}>A</BoldGlyph>
                <TinyCaret c="#bbb" />
              </ToolSlot>
              <ToolSlot $w={30}>
                <svg width="15" height="15" viewBox="0 0 15 15" fill="none">
                  <path d="M4 13 13 2l1 1-8 11z" fill="#b5b5b5" />
                  <path d="M2 2v6M2 5.500h4V8H2" stroke="#aaa" />
                </svg>
                <TinyCaret c="#bbb" />
              </ToolSlot>
              <ToolSlot $w={34}>
                <svg width="14" height="15" viewBox="0 0 14 15" fill="none">
                  <path d="M6 1l6 7-5 5-6-6z" stroke="#b5b5b5" />
                </svg>
                <TinyCaret c="#bbb" />
              </ToolSlot>
              <ToolSep />
              <ToolSlot $w={23}>
                <LinesIcon align="l" />
              </ToolSlot>
              <ToolSlot $w={23}>
                <LinesIcon align="c" />
              </ToolSlot>
              <ToolSlot $w={23}>
                <LinesIcon align="r" />
              </ToolSlot>
              <ToolSep />
              <ToolSlot $w={35}>
                <svg width="15" height="15" viewBox="0 0 15 15" fill="none">
                  <path d="M14 1 1 14h13zM6 14V9M10 14V5M4 11h10M7 7h7" stroke="#aaa" />
                </svg>
                <TinyCaret c="#bbb" />
              </ToolSlot>
              <ToolSep />
              <ToolSlot $w={34}>
                <svg width="16" height="17" viewBox="0 0 16 17" fill="none">
                  <rect x=".5" y=".5" width="15" height="10" stroke="#b5b5b5" />
                  <path d="M.5 4h15M5.500 1v10M10.500 1v10" stroke="#bbb" />
                  <rect y="13" width="16" height="4" fill="#b8b8b8" />
                </svg>
                <TinyCaret c="#bbb" />
              </ToolSlot>
            </FontLine>
          </FontGroup>
        </Group>
        <RibbonRest>
          <svg width="11" height="6" viewBox="0 0 11 6" fill="none">
            <path d="M.5 5.500l5-5 5 5" stroke="#555" />
          </svg>
        </RibbonRest>
      </Ribbon>

      <DocArea>
        <DocTabs>
          <DocTab>
            <IifLogo />
            Phần Mềm Bán Hàng
          </DocTab>
          <DocClose>
            <svg width="9" height="9" viewBox="0 0 9 9" fill="none">
              <path d="M.5.500l8 8M8.500.500l-8 8" stroke="#222" strokeWidth="1.4" />
            </svg>
          </DocClose>
        </DocTabs>
        <DocMiddle>
          <DocBody>
            <LogoRow>
              <SellLogo />
            </LogoRow>
            <MenuFrame>
              <MenuLegend>DANH MỤC</MenuLegend>
              {menuItems.map((m) => (
                <MenuButton key={m}>{m}</MenuButton>
              ))}
            </MenuFrame>
          </DocBody>
          <VScroll>
            <ScrollBtn>
              <svg width="8" height="4" viewBox="0 0 8 4">
                <path d="M0 4h8L4 0z" fill="#555" />
              </svg>
            </ScrollBtn>
            <VThumb />
            <ScrollGap />
            <ScrollBtn>
              <TinyCaret c="#555" />
            </ScrollBtn>
          </VScroll>
        </DocMiddle>
        <HScroll>
          <ScrollBtn>
            <svg width="4" height="8" viewBox="0 0 4 8">
              <path d="M4 0v8L0 4z" fill="#555" />
            </svg>
          </ScrollBtn>
          <HThumb />
          <HGap />
          <ScrollBtn>
            <svg width="4" height="8" viewBox="0 0 4 8">
              <path d="M0 0v8l4-4z" fill="#555" />
            </svg>
          </ScrollBtn>
        </HScroll>
      </DocArea>

      <Taskbar>
        <StartButton>
          <WinLogo />
        </StartButton>
        <SearchBox>
          <svg width="16" height="18" viewBox="0 0 16 18" fill="none">
            <circle cx="10" cy="6.500" r="5" stroke="#222" strokeWidth="1.2" />
            <path d="M6.500 10.500 1 16.500" stroke="#222" strokeWidth="1.3" />
          </svg>
          Type here to search
          <SceneSlot>
            <FieldScene />
          </SceneSlot>
        </SearchBox>
        <TaskApps>
          <TaskApp>
            <AccessIcon />
          </TaskApp>
          <TaskApp>
            <EdgeIcon />
          </TaskApp>
          <TaskApp>
            <WindowsStack />
          </TaskApp>
          <TaskApp $bar="#1079d6">
            <FolderIcon />
          </TaskApp>
          <TaskApp $bg="#f5a96b" $bar="#f07818">
            <KeysIcon />
          </TaskApp>
          <TaskApp $bar="#1079d6">
            <FirefoxIcon />
          </TaskApp>
          <TaskApp $bg="#ece8e8" $bar="#1079d6">
            <IifLogo w={24} h={16} />
          </TaskApp>
        </TaskApps>
        <Tray>
          <TraySlot $w={35}>
            <WeatherIcon />
            <Badge>5</Badge>
          </TraySlot>
          <TraySlot $w={38} $start>
            32°C
          </TraySlot>
          <TraySlot $w={97} $start $size={13.5}>
            Nắng rải rác
          </TraySlot>
          <TraySlot $w={18}>
            <svg width="13" height="7" viewBox="0 0 13 7" fill="none">
              <path d="M.5 6.500l6-6 6 6" stroke="#111" strokeWidth="1.2" />
            </svg>
          </TraySlot>
          <TraySlot $w={24}>
            <PowerIcon />
          </TraySlot>
          <TraySlot $w={36}>
            <KeyboardIcon />
          </TraySlot>
          <TraySlot $w={34}>ENG</TraySlot>
          <Clock>
            2:36 PM
            <br />
            23/8/2025
          </Clock>
          <TraySlot $w={42}>
            <NotifyIcon />
          </TraySlot>
        </Tray>
      </Taskbar>

      <Dialog>
        <Caption>
          <IifLogo />
          Hóa đơn
          <CaptionClose>
            <svg width="11" height="11" viewBox="0 0 11 11" fill="none">
              <path d="M.5.500l10 10M10.500.500l-10 10" stroke="#111" />
            </svg>
          </CaptionClose>
        </Caption>
        <FormHeader>
          <ReceiptBox>
            <ReceiptIcon />
          </ReceiptBox>
          <FormTitle>HÓA ĐƠN</FormTitle>
          <HeaderGroup>
            <HeadLabel $w={47}>Ngày</HeadLabel>
            <Field $w={231} $right $size={18}>
              23/8/2025 2:36:12 PM
            </Field>
            <HeadLabel $w={35} $left={38}>
              Số:
            </HeadLabel>
            <Field $w={73} $h={22} $lh={21} $right>
              <RedValue>85</RedValue>
            </Field>
          </HeaderGroup>
          <PrintSlot>
            <CmdButton $w={125} $h={33}>
              <PrintDoc />
              In phiếu
            </CmdButton>
          </PrintSlot>
        </FormHeader>
        <FormDetail>
          <Selector>
            <svg width="8" height="12" viewBox="0 0 8 12">
              <path d="M0 0l8 6-8 6z" fill="#444" />
            </svg>
          </Selector>
          <DetailBody>
            <FormRow $top={3} $h={24}>
              <RowLabel $w={135}>Mã Khách Hàng</RowLabel>
              <Combo>
                MK003
                <ComboBtn>
                  <ComboArrow />
                </ComboBtn>
              </Combo>
              <Field $w={645} $h={24} $lh={22} $left={11}>
                Trần Thị C
              </Field>
            </FormRow>
            <FormRow $top={7} $h={25}>
              <RowLabel $w={135}>Điện Thoại</RowLabel>
              <Field $w={141}>0803567ZZZ</Field>
              <RowLabel $w={63} $left={12}>
                Địa Chỉ
              </RowLabel>
              <Field $w={581}>HCM</Field>
            </FormRow>
            <FormRow $top={11} $h={41}>
              <RowLabel $w={135}>Ghi Chú</RowLabel>
              <Field $w={801} $h={41} />
            </FormRow>
            <Datasheet>
              <SheetHead>
                <HeadCell $corner />
                {columns.map((c, i) => (
                  <HeadCell key={c} $active={i === 1}>
                    {c}
                    <SortCaret>
                      <TinyCaret c="#555" />
                    </SortCaret>
                  </HeadCell>
                ))}
                <HeadCell $tail />
              </SheetHead>
              <SheetRow>
                <RowHead $faint />
                <Cell>1</Cell>
                <Cell>TP587</Cell>
                <Cell>Mì Gói</Cell>
                <Cell>Gói</Cell>
                <Cell $align="center">1</Cell>
                <Cell $align="right">2,500</Cell>
                <Cell $align="right">2,500</Cell>
                <Tail />
              </SheetRow>
              <SheetRow $on>
                <RowHead $edit>
                  <svg width="10" height="12" viewBox="0 0 10 12">
                    <path d="M6 1l3 2-5 6-3 1 .5-3z" fill="#222" />
                    <path d="M1 11h1" stroke="#222" />
                  </svg>
                </RowHead>
                <Cell>2</Cell>
                <ActiveCell>
                  <Selected>TP587</Selected>
                  <ComboBtn>
                    <ComboArrow />
                  </ComboBtn>
                </ActiveCell>
                <Cell>Mì Gói</Cell>
                <Cell>Gói</Cell>
                <Cell $align="center">1</Cell>
                <Cell $align="right">2,500</Cell>
                <Cell $align="right">2,500</Cell>
                <Tail />
              </SheetRow>
              <SheetRow>
                <RowHead>
                  <NewRowMark />
                </RowHead>
                <Cell>0</Cell>
                <Cell />
                <Cell />
                <Cell />
                <Cell $align="center">1</Cell>
                <Cell $align="right">0</Cell>
                <Cell />
                <Tail />
              </SheetRow>
              <EmptyRow />
              <EmptyRow />
              <EmptyRow />
              <EmptyRow />
              <EmptyRow />
            </Datasheet>
            <SheetFooter>
              <ButtonRow>
                <CmdButton $w={149}>
                  <ClipCheck />
                  Thêm mới phiếu
                </CmdButton>
                <CmdButton $w={88} $left={3}>
                  <FloppyIcon />
                  Lưu
                </CmdButton>
                <CmdButton $w={97}>
                  <ReloadDoc />
                  Nạp lại
                </CmdButton>
                <CmdButton $w={61}>
                  <DeleteX c="#666" s={10} />
                  &nbsp;Đóng
                </CmdButton>
              </ButtonRow>
              <TotalLabel>Tổng:</TotalLabel>
              <Field $w={201} $h={29} $lh={29} $right>
                <RedValue $size={19}>2,500&nbsp;</RedValue>
              </Field>
            </SheetFooter>
          </DetailBody>
        </FormDetail>
        <RecordBar>
          <RecordLabel>Record:</RecordLabel>
          <NavSlot $w={18}>
            <NavIcon kind="first" />
          </NavSlot>
          <NavSlot $w={17}>
            <NavIcon kind="prev" />
          </NavSlot>
          <NavBox $w={49}>1 of 1</NavBox>
          <NavSlot $w={22}>
            <NavIcon kind="next" />
          </NavSlot>
          <NavSlot $w={13}>
            <NavIcon kind="last" />
          </NavSlot>
          <NavSlot $w={14}>
            <NavIcon kind="new" />
          </NavSlot>
          <NavSlot $w={9} />
          <NavSep />
          <NoFilter>
            <FilterOff />
            No Filter
          </NoFilter>
          <NavSep />
          <NavSlot $w={5} />
          <NavBox $w={69}>Search</NavBox>
        </RecordBar>
      </Dialog>
    </Screen>
  );
}
